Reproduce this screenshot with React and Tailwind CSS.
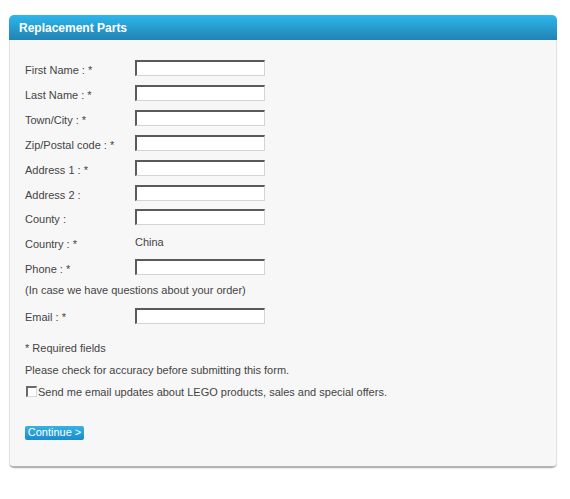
const fields = [
  { label: "First Name : *", h: "h-[25px]" },
  { label: "Last Name : *", h: "h-[25px]" },
  { label: "Town/City : *", h: "h-[25px]" },
  { label: "Zip/Postal code : *", h: "h-[25px]" },
  { label: "Address 1 : *", h: "h-[25px]" },
  { label: "Address 2 :", h: "h-[24px]" },
  { label: "County :", h: "h-[25px]" },
];

function TextBox() {
  return (
    <input
      type="text"
      className="h-[16px] w-[130px] border-t-2 border-l-2 border-r border-b border-t-[#5a5a5a] border-l-[#5a5a5a] border-r-[#d4d4d4] border-b-[#d4d4d4] bg-white outline-none"
    />
  );
}

function Row({ label, h = "h-[25px]", children }) {
  return (
    <div className={`flex items-start ${h}`}>
      <div className="w-[110px] pt-[2px] leading-[16px]">{label}</div>
      {children}
    </div>
  );
}

export default function App() {
  return (
    <div className="min-h-[499px] bg-white pt-[15px] pl-[9px] text-[11px] text-[#444] [font-family:'Liberation_Sans',Arial,sans-serif]">
      <div className="w-[548px] rounded-b-[5px] border-b-2 border-[#b4b4b4] shadow-[0_1px_1px_rgba(0,0,0,0.08)]">
        <div className="flex h-[25px] items-center rounded-t-[5px] bg-gradient-to-b from-[#2db8ec] to-[#2282b4] px-[10px] text-[12px] font-bold text-white">
          Replacement Parts
        </div>

        <div className="h-[426px] rounded-b-[4px] border-x border-[#e2e2e2] bg-[#f7f7f7] pt-[20px] pl-[15px]">
          {fields.map((f) => (
            <Row key={f.label} label={f.label} h={f.h}>
              <TextBox />
            </Row>
          ))}

          <Row label="Country : *">
            <div className="pt-0 leading-[16px]">China</div>
          </Row>

          <Row label="Phone : *" h="h-[23px]">
            <TextBox />
          </Row>

          <div className="h-[26px] leading-[16px]">(In case we have questions about your order)</div>

          <div className="flex h-[32px] items-start">
            <div className="w-[110px] pt-[1px] leading-[16px]">Email : *</div>
            <TextBox />
          </div>

          <div className="h-[22px] leading-[16px]">* Required fields</div>
          <div className="h-[22px] leading-[16px]">Please check for accuracy before submitting this form.</div>

          <label className="flex h-[42px] items-start leading-[16px]">
            <span className="mt-[2px] ml-[1px] h-[11px] w-[11px] shrink-0 border-t-2 border-l-2 border-r border-b border-t-[#6a6a6a] border-l-[#6a6a6a] border-r-[#d8d8d8] border-b-[#d8d8d8] bg-white" />
            <span className="ml-[1px]">Send me email updates about LEGO products, sales and special offers.</span>
          </label>

          <button className="flex h-[14px] w-[59px] items-center justify-center rounded-[2px] bg-gradient-to-b from-[#35b2e6] to-[#1a8ccb] pb-[1px] text-[11px] leading-none text-white">
            Continue &gt;
          </button>
        </div>
      </div>
    </div>
  );
}
